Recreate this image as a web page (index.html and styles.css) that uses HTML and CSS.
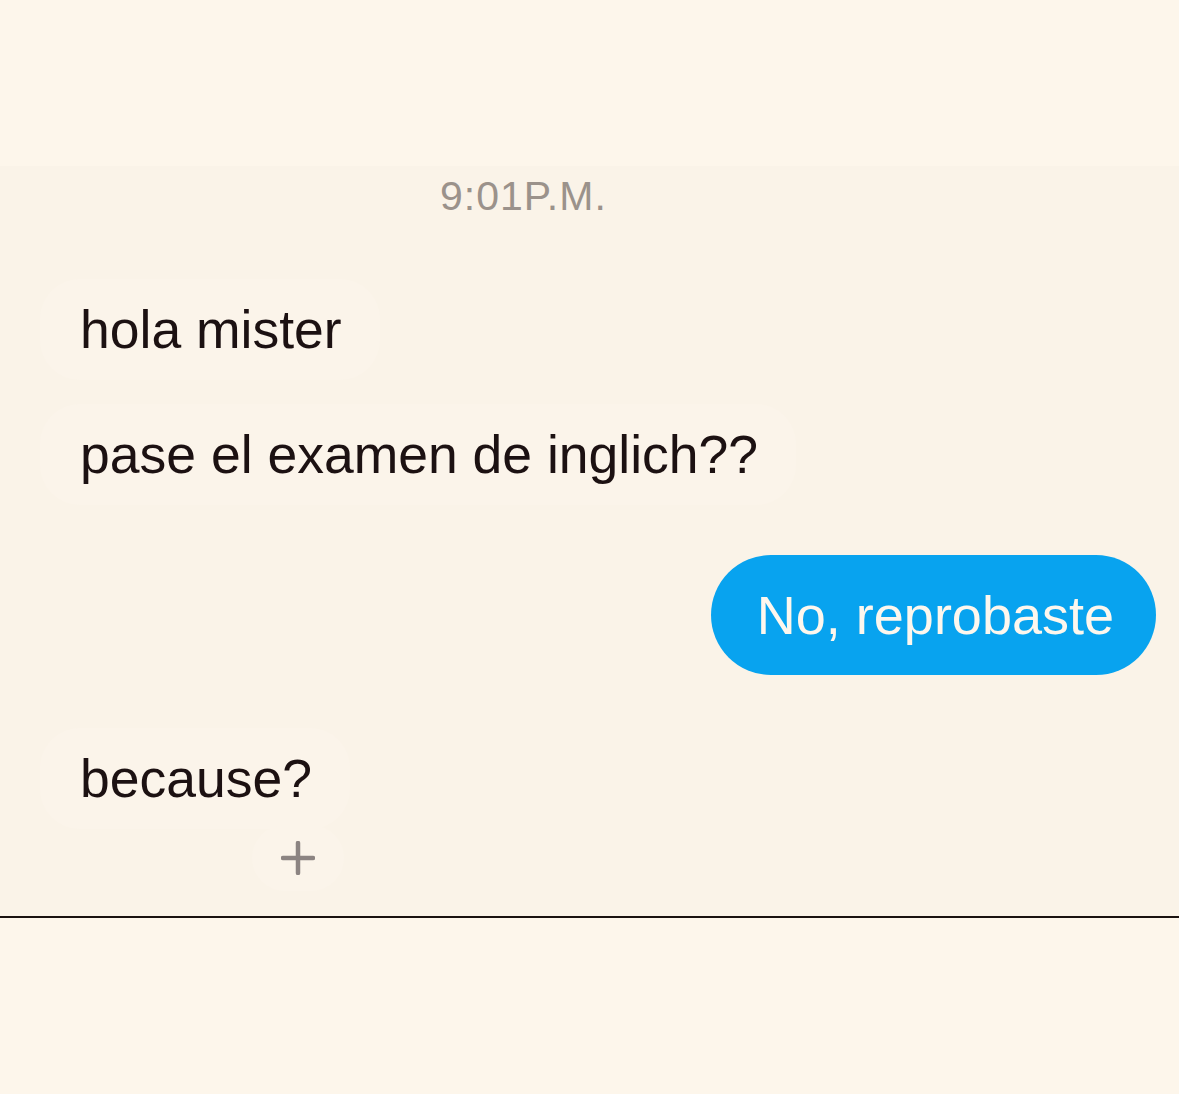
FILE: index.html
```html
<!DOCTYPE html>
<html lang="es">
<head>
<meta charset="utf-8">
<title>Chat</title>
<link rel="stylesheet" href="styles.css">
</head>
<body>
<div class="top"></div>
<main class="chat">
  <div class="time">9:01P.M.</div>
  <div class="row in first"><div class="bubble">hola mister</div></div>
  <div class="row in second"><div class="bubble">pase el examen de inglich??</div></div>
  <div class="row out"><div class="bubble blue">No, reprobaste</div></div>
  <div class="row in fourth"><div class="bubble">because?</div></div>
  <div class="row plus-row">
    <div class="plus">
      <svg width="34" height="34" viewBox="0 0 34 34"><path d="M17 2V32M2 17H32" stroke="#8c8482" stroke-width="4.5" stroke-linecap="round"/></svg>
    </div>
  </div>
</main>
<div class="divider"></div>
<div class="bottom"></div>
</body>
</html>
```

FILE: styles.css
```css
html, body {
  margin: 0;
  padding: 0;
  background: #fdf6eb;
  font-family: "Liberation Sans", Arial, sans-serif;
}
.top {
  height: 166px;
  background: #fdf6eb;
}
.chat {
  height: 750px;
  box-sizing: border-box;
  background: #faf3e8;
  padding: 6px 23px 0 40px;
  display: flex;
  flex-direction: column;
}
.time {
  font-size: 41px;
  line-height: 48px;
  color: #9b928b;
  padding-left: 400px;
  letter-spacing: 1px;
}
.row {
  display: flex;
}
.row.out {
  justify-content: flex-end;
  margin-top: 50px;
}
.first { margin-top: 59px; }
.second { margin-top: 24px; }
.fourth { margin-top: 53px; }
.bubble {
  font-size: 53.5px;
  line-height: 61px;
  color: #1c1112;
  background: #fbf4ea;
  border-radius: 40px;
  padding: 20px 38px 20px 40px;
}
.bubble.blue {
  font-size: 54px;
  background: #08a3ef;
  color: #fdf7ee;
  height: 120px;
  box-sizing: border-box;
  padding: 30px 42px 29px 46px;
  border-radius: 60px;
}
.plus-row {
  margin-top: -4px;
  padding-left: 212px;
}
.plus {
  width: 92px;
  height: 66px;
  border-radius: 33px;
  background: #fbf4ea;
  display: flex;
  align-items: center;
  justify-content: center;
}
.divider {
  height: 2px;
  background: #1a1210;
}
.bottom {
  height: 176px;
  background: #fdf6eb;
}
```
